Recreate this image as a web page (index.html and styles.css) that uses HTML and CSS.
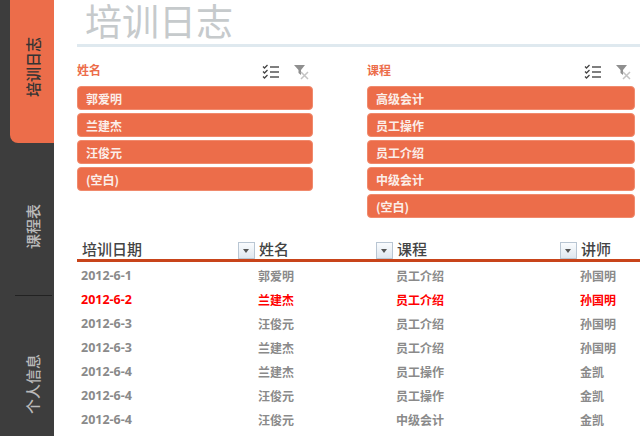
FILE: index.html
```html
<!DOCTYPE html>
<html lang="zh">
<head>
<meta charset="utf-8">
<title>培训日志</title>
<link rel="stylesheet" href="styles.css">
</head>
<body>
<div class="app">
  <nav class="side">
    <div class="tab active"><span class="tab-text">培训日志</span></div>
    <div class="tab plain"><span class="tab-text">课程表</span></div>
    <div class="tab-rule"></div>
    <div class="tab last"><span class="tab-text">个人信息</span></div>
  </nav>
  <main class="main">
    <h1 class="title">培训日志</h1>
    <div class="rule"></div>
    <section class="slicers">
      <div class="slicer left">
        <div class="slicer-head">
          <span class="slicer-name">姓名</span>
          <span class="tools">
            <svg class="ico" viewBox="0 0 18 16"><g fill="none" stroke="#444" stroke-width="1.3"><path d="M1 2.5l1.5 1.5 3-3"/><path d="M1 7.5l1.5 1.5 3-3"/><path d="M1 12.5l1.5 1.5 3-3"/></g><g stroke="#555" stroke-width="1.6"><path d="M8 3h9M8 8h9M8 13h9"/></g></svg>
            <svg class="ico" viewBox="0 0 18 16"><path d="M1 1h11L8 6v5L5.5 9V6z" fill="#8f8f8f"/><path d="M8 8l7 7M15 8l-7 7" stroke="#c4c4c4" stroke-width="1.5"/></svg>
          </span>
        </div>
        <div class="item">郭爱明</div>
        <div class="item">兰建杰</div>
        <div class="item">汪俊元</div>
        <div class="item">(空白)</div>
      </div>
      <div class="slicer right">
        <div class="slicer-head">
          <span class="slicer-name">课程</span>
          <span class="tools">
            <svg class="ico" viewBox="0 0 18 16"><g fill="none" stroke="#444" stroke-width="1.3"><path d="M1 2.5l1.5 1.5 3-3"/><path d="M1 7.5l1.5 1.5 3-3"/><path d="M1 12.5l1.5 1.5 3-3"/></g><g stroke="#555" stroke-width="1.6"><path d="M8 3h9M8 8h9M8 13h9"/></g></svg>
            <svg class="ico" viewBox="0 0 18 16"><path d="M1 1h11L8 6v5L5.5 9V6z" fill="#8f8f8f"/><path d="M8 8l7 7M15 8l-7 7" stroke="#c4c4c4" stroke-width="1.5"/></svg>
          </span>
        </div>
        <div class="item">高级会计</div>
        <div class="item">员工操作</div>
        <div class="item">员工介绍</div>
        <div class="item">中级会计</div>
        <div class="item">(空白)</div>
      </div>
    </section>
    <section class="table">
      <div class="row head">
        <div class="cell first">培训日期<span class="drop"></span></div>
        <div class="cell">姓名<span class="drop"></span></div>
        <div class="cell">课程<span class="drop"></span></div>
        <div class="cell">讲师</div>
      </div>
      <div class="row"><div class="cell first">2012-6-1</div><div class="cell">郭爱明</div><div class="cell">员工介绍</div><div class="cell">孙国明</div></div>
      <div class="row hot"><div class="cell first">2012-6-2</div><div class="cell">兰建杰</div><div class="cell">员工介绍</div><div class="cell">孙国明</div></div>
      <div class="row"><div class="cell first">2012-6-3</div><div class="cell">汪俊元</div><div class="cell">员工介绍</div><div class="cell">孙国明</div></div>
      <div class="row"><div class="cell first">2012-6-3</div><div class="cell">兰建杰</div><div class="cell">员工介绍</div><div class="cell">孙国明</div></div>
      <div class="row"><div class="cell first">2012-6-4</div><div class="cell">兰建杰</div><div class="cell">员工操作</div><div class="cell">金凯</div></div>
      <div class="row"><div class="cell first">2012-6-4</div><div class="cell">汪俊元</div><div class="cell">员工操作</div><div class="cell">金凯</div></div>
      <div class="row"><div class="cell first">2012-6-4</div><div class="cell">汪俊元</div><div class="cell">中级会计</div><div class="cell">金凯</div></div>
    </section>
  </main>
</div>
</body>
</html>
```
FILE: styles.css
```css
* { box-sizing: border-box; }
html, body { margin: 0; padding: 0; height: 436px; overflow: hidden; background: #fff; }
body { font-family: "Open Sans", "Noto Sans CJK SC", sans-serif; }
.app { display: flex; width: 640px; height: 436px; }

.side { width: 54px; flex: none; background: #3d3d3d; display: flex; flex-direction: column; align-items: flex-end; }
.tab { display: flex; align-items: center; justify-content: center; width: 44px; }
.tab-text { writing-mode: vertical-rl; text-orientation: sideways; transform: rotate(180deg); font: 500 15px "Noto Sans CJK SC", sans-serif; color: #b9b9b9; }
.tab.active { height: 143px; padding-bottom: 9px; background: #ec6d4a; border-bottom-left-radius: 8px; }
.tab.active .tab-text { color: #333; }
.tab.plain { height: 152px; padding-top: 16px; }
.tab-rule { width: 37px; height: 1px; margin-right: 2px; background: #222; }
.tab.last { flex: 1; padding-top: 36px; }

.main { flex: 1; min-width: 0; padding-left: 23px; }
.title { margin: 0; height: 44px; padding: 4px 0 0 8px; font: 400 37px/40px "Liberation Sans", "Noto Sans CJK SC", sans-serif; color: #c6cacc; }
.rule { height: 3px; background: #dfe9ef; }

.slicers { display: grid; grid-template-columns: 236px 268px; column-gap: 54px; height: 192px; padding-top: 13px; }
.slicer-head { display: flex; justify-content: space-between; align-items: center; height: 26px; padding-bottom: 3px; }
.slicer-name { font: 700 12px "Noto Sans CJK SC", sans-serif; color: #ec6d4a; position: relative; top: -2px; }
.tools { display: flex; gap: 13px; padding-right: 2px; }
.ico { width: 18px; height: 16px; display: block; }
.item { height: 24px; margin-bottom: 3px; padding-left: 8px; background: #ec6d4a; border: 1px solid #f08a6d; border-radius: 4px; color: #fbeee9; font: 700 12px/23px "Noto Sans CJK SC", sans-serif; }

.table { display: flex; flex-direction: column; }
.row { display: grid; grid-template-columns: 180px 138px 184px 1fr; height: 24px; align-items: center; color: #8a8a8a; font: 700 12px "Noto Sans CJK SC", sans-serif; }
.row .cell { padding-left: 1px; }
.row .first { padding-left: 4px; font-family: "Open Sans", sans-serif; font-size: 12.5px; }
.row.hot { color: #f00; }
.row.head { height: 23px; margin-bottom: 1px; border-bottom: 3px solid #c8441a; color: #444; font-size: 15px; font-weight: 500; }
.head .cell { display: flex; justify-content: space-between; align-items: flex-end; height: 20px; line-height: 20px; padding-left: 2px; }
.head .cell.first { padding-left: 5px; font-family: "Noto Sans CJK SC", sans-serif; font-size: 15px; }
.drop { position: relative; width: 17px; height: 17px; margin-right: 2px; background: linear-gradient(#fafcfe, #dfe7ef); border: 1px solid #b9c6d3; }
.drop::after { content: ""; position: absolute; left: 4px; top: 6px; border: 3px solid transparent; border-top: 4px solid #555; border-bottom: 0; }
```
